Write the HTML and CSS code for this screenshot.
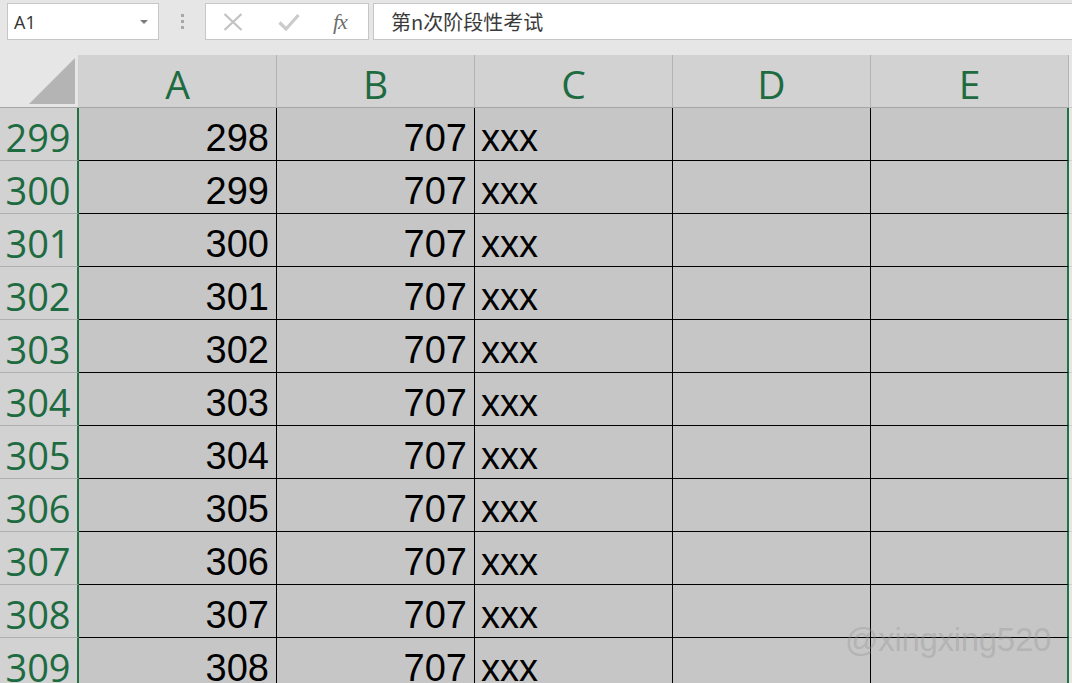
FILE: index.html
```html
<!DOCTYPE html>
<html lang="zh-CN">
<head>
<meta charset="utf-8">
<title>Sheet</title>
<link rel="stylesheet" href="styles.css">
</head>
<body>
<div class="app">
  <div class="toolbar">
    <div class="namebox">
      <span class="ref">A1</span>
      <svg class="dd" width="8" height="4" viewBox="0 0 8 4"><path d="M0 0H8L4 4Z" fill="#7a7a7a"/></svg>
    </div>
    <div class="dots"><i></i><i></i><i></i></div>
    <div class="fbtns">
      <svg class="ico" width="20" height="18" viewBox="0 0 20 18"><path d="M1.5 1L18.5 17M18.5 1L1.5 17" stroke="#c2c2c2" stroke-width="2.2" fill="none"/></svg>
      <svg class="ico" width="22" height="18" viewBox="0 0 22 18"><path d="M1.5 9.5L8 16L20.5 2" stroke="#cbcbcb" stroke-width="3.2" fill="none"/></svg>
      <span class="fx">fx</span>
    </div>
    <div class="finput">第n次阶段性考试</div>
  </div>

  <div class="sheet">
    <div class="corner"><svg width="46" height="46" viewBox="0 0 46 46"><path d="M46 0V46H0Z" fill="#b4b4b4"/></svg></div>
    <div class="ch">A</div><div class="ch">B</div><div class="ch">C</div><div class="ch">D</div><div class="ch last">E</div><div class="ch-fill"></div>

    <div class="rh">299</div><div class="c num">298</div><div class="c num">707</div><div class="c">xxx</div><div class="c"></div><div class="c last"></div><div class="fill"></div>
    <div class="rh">300</div><div class="c num">299</div><div class="c num">707</div><div class="c">xxx</div><div class="c"></div><div class="c last"></div><div class="fill"></div>
    <div class="rh">301</div><div class="c num">300</div><div class="c num">707</div><div class="c">xxx</div><div class="c"></div><div class="c last"></div><div class="fill"></div>
    <div class="rh">302</div><div class="c num">301</div><div class="c num">707</div><div class="c">xxx</div><div class="c"></div><div class="c last"></div><div class="fill"></div>
    <div class="rh">303</div><div class="c num">302</div><div class="c num">707</div><div class="c">xxx</div><div class="c"></div><div class="c last"></div><div class="fill"></div>
    <div class="rh">304</div><div class="c num">303</div><div class="c num">707</div><div class="c">xxx</div><div class="c"></div><div class="c last"></div><div class="fill"></div>
    <div class="rh">305</div><div class="c num">304</div><div class="c num">707</div><div class="c">xxx</div><div class="c"></div><div class="c last"></div><div class="fill"></div>
    <div class="rh">306</div><div class="c num">305</div><div class="c num">707</div><div class="c">xxx</div><div class="c"></div><div class="c last"></div><div class="fill"></div>
    <div class="rh">307</div><div class="c num">306</div><div class="c num">707</div><div class="c">xxx</div><div class="c"></div><div class="c last"></div><div class="fill"></div>
    <div class="rh">308</div><div class="c num">307</div><div class="c num">707</div><div class="c">xxx</div><div class="c"></div><div class="c last"></div><div class="fill"></div>
    <div class="rh">309</div><div class="c num">308</div><div class="c num">707</div><div class="c">xxx</div><div class="c"></div><div class="c last"></div><div class="fill"></div>
  </div>
  <div class="watermark">@xingxing520</div>
</div>
</body>
</html>
```

FILE: styles.css
```css
* { box-sizing: border-box; }
html, body { margin: 0; padding: 0; }
body {
  width: 1072px;
  height: 683px;
  overflow: hidden;
  background: #e6e6e6;
  font-family: "Liberation Sans", Arial, sans-serif;
}
.app { position: relative; width: 1072px; height: 683px; overflow: hidden; }

.toolbar {
  height: 55px;
  display: flex;
  align-items: flex-start;
  padding: 3px 0 0 7px;
  background: #e6e6e6;
}
.namebox {
  width: 152px;
  height: 37px;
  background: #fff;
  border: 1px solid #c6c6c6;
  display: flex;
  align-items: center;
  justify-content: space-between;
  padding: 0 10px 0 6px;
}
.ref {
  font-family: "Open Sans", "Noto Sans", sans-serif;
  font-size: 18px;
  color: #333;
}
.dd { margin-top: 1px; }
.dots {
  width: 46px;
  height: 37px;
  display: flex;
  flex-direction: column;
  align-items: center;
  justify-content: center;
  gap: 3px;
}
.dots i { display: block; width: 3px; height: 3px; background: #a8a8a8; }
.fbtns {
  width: 164px;
  height: 37px;
  background: #fff;
  border: 1px solid #c6c6c6;
  display: flex;
  align-items: center;
  padding-left: 17px;
  gap: 35px;
}
.fbtns .ico { display: block; flex: none; }
.fx {
  font-family: "Liberation Serif", "Times New Roman", serif;
  font-style: italic;
  font-size: 22px;
  color: #6e6e6e;
  margin-left: -2px;
  letter-spacing: -1px;
}
.finput {
  flex: 1;
  margin-left: 4px;
  height: 37px;
  background: #fff;
  border: 1px solid #c6c6c6;
  border-right: none;
  padding-left: 17px;
  display: flex;
  align-items: center;
  font-family: "Noto Sans CJK SC", "Noto Sans", sans-serif;
  font-size: 20px;
  color: #3a3a3a;
}

.sheet {
  display: grid;
  grid-template-columns: 79px repeat(5, 198px) 1fr;
  grid-template-rows: 53px repeat(11, 53px);
}
.corner {
  background: #e6e6e6;
  border-right: 1px solid #cfcfcf;
  border-bottom: 1px solid #a6a6a6;
  display: flex;
  align-items: flex-end;
  justify-content: flex-end;
  padding: 0 3px 3px 0;
}
.corner svg { display: block; }
.ch {
  background: #d2d2d2;
  border-right: 1px solid #b3b3b3;
  border-bottom: 1px solid #a6a6a6;
  display: flex;
  align-items: flex-end;
  justify-content: center;
  font-family: "Open Sans", "Noto Sans", sans-serif;
  font-size: 39px;
  line-height: 46px;
  color: #1e6b41;
}
.ch-fill { background: #e6e6e6; border-bottom: 1px solid #c6c6c6; }

.rh {
  background: #d2d2d2;
  border-right: 2px solid #217346;
  border-bottom: 1px solid #b0b0b0;
  display: flex;
  align-items: flex-end;
  justify-content: center;
  padding-right: 1px;
  font-family: "Open Sans", "Noto Sans", sans-serif;
  font-size: 38px;
  line-height: 45px;
  color: #1e6b41;
}
.c {
  background: #c6c6c6;
  border-right: 1px solid #000;
  border-bottom: 1px solid #000;
  display: flex;
  align-items: flex-end;
  padding: 0 6px 0 6px;
  font-size: 38px;
  line-height: 43px;
  color: #000;
}
.c.num { justify-content: flex-end; padding-right: 7px; }
.c.last { border-right: 2px solid #217346; }
.fill { background: #e6e6e6; border-bottom: 1px solid #d0d0d0; }

.watermark {
  position: absolute;
  left: 845px;
  top: 621px;
  font-family: "Liberation Sans", Arial, sans-serif;
  font-size: 33px;
  color: rgba(150, 150, 150, 0.4);
  letter-spacing: -0.3px;
  pointer-events: none;
}
```
